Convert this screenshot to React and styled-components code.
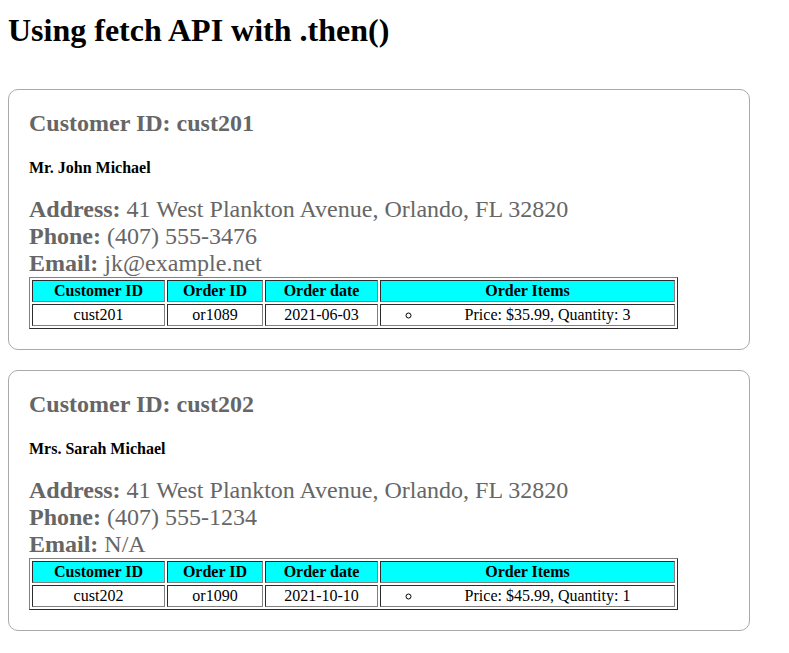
import React from 'react';
import styled, { createGlobalStyle } from 'styled-components';

const GlobalStyle = createGlobalStyle`
  body {
    margin: 0;
    padding: 12px 8px 8px;
    font-family: "Liberation Serif", "Times New Roman", serif;
    font-size: 16px;
    background: #fff;
    color: #000;
  }
`;

const customers = [
  {
    id: 'cust201',
    name: 'Mr. John Michael',
    address: '41 West Plankton Avenue, Orlando, FL 32820',
    phone: '(407) 555-3476',
    email: 'jk@example.net',
    orders: [
      { id: 'or1089', date: '2021-06-03', items: [{ price: '$35.99', qty: 3 }] },
    ],
  },
  {
    id: 'cust202',
    name: 'Mrs. Sarah Michael',
    address: '41 West Plankton Avenue, Orlando, FL 32820',
    phone: '(407) 555-1234',
    email: 'N/A',
    orders: [
      { id: 'or1090', date: '2021-10-10', items: [{ price: '$45.99', qty: 1 }] },
    ],
  },
];

const Title = styled.h1`
  margin: 0 0 40px;
  font-size: 32px;
  font-weight: bold;
`;

const Card = styled.div`
  width: 700px;
  padding: 20px;
  margin-bottom: 20px;
  border: 1px solid #aaa;
  border-radius: 10px;
`;

const CustomerId = styled.h2`
  margin: 0 0 19.92px;
  font-size: 24px;
  color: #666;
`;

const Name = styled.h4`
  margin: 22px 0 19px;
  font-size: 16px;
`;

const Details = styled.div`
  font-size: 24px;
  color: #666;
`;

const Label = styled.b`
  font-weight: bold;
`;

const Orders = styled.table`
  width: 649px;
  border: 1px outset grey;
  border-spacing: 2px;
  font-size: 16px;
  color: #000;
`;

const HeadCell = styled.th`
  width: ${(p) => (p.$w ? `${p.$w}px` : 'auto')};
  padding: 1px;
  border: 1px inset grey;
  background: cyan;
  font-weight: bold;
  text-align: center;
`;

const Cell = styled.td`
  padding: 1px;
  border: 1px inset grey;
  text-align: center;
`;

const ItemList = styled.ul`
  margin: 0;
  padding-left: 40px;
  list-style-type: circle;
`;

function CustomerCard({ customer }) {
  return (
    <Card>
      <CustomerId>Customer ID: {customer.id}</CustomerId>
      <Name>{customer.name}</Name>
      <Details>
        <div><Label>Address:</Label> {customer.address}</div>
        <div><Label>Phone:</Label> {customer.phone}</div>
        <div><Label>Email:</Label> {customer.email}</div>
      </Details>
      <Orders>
        <thead>
          <tr>
            <HeadCell $w={129}>Customer ID</HeadCell>
            <HeadCell $w={92}>Order ID</HeadCell>
            <HeadCell $w={109}>Order date</HeadCell>
            <HeadCell>Order Items</HeadCell>
          </tr>
        </thead>
        <tbody>
          {customer.orders.map((o) => (
            <tr key={o.id}>
              <Cell>{customer.id}</Cell>
              <Cell>{o.id}</Cell>
              <Cell>{o.date}</Cell>
              <Cell>
                <ItemList>
                  {o.items.map((it, i) => (
                    <li key={i}>Price: {it.price}, Quantity: {it.qty}</li>
                  ))}
                </ItemList>
              </Cell>
            </tr>
          ))}
        </tbody>
      </Orders>
    </Card>
  );
}

export default function App() {
  return (
    <>
      <GlobalStyle />
      <Title>Using fetch API with .then()</Title>
      {customers.map((c) => (
        <CustomerCard key={c.id} customer={c} />
      ))}
    </>
  );
}
